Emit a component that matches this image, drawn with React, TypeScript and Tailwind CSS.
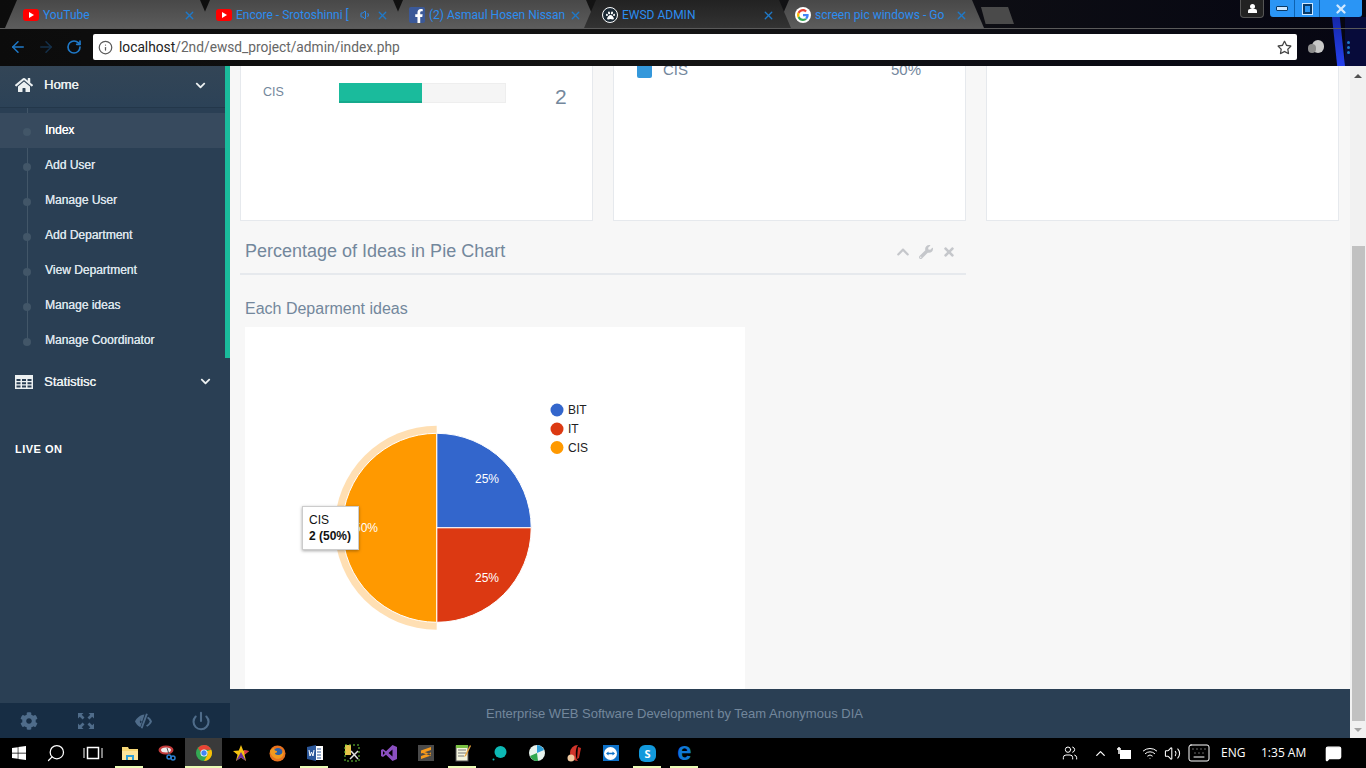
import React from "react";
import { FaHome, FaChevronDown, FaChevronUp, FaCog, FaWrench, FaTimes, FaWindows, FaFacebookF, FaPaw, FaRegStar } from "react-icons/fa";
import { Info, ArrowLeft, ArrowRight, RotateCw, X, Volume1, Search, ChevronUp, Wifi, Volume2, Keyboard, MessageSquare, Users, Power } from "lucide-react";

function YT() {
  return <span className="w-[16px] h-[12px] bg-[#f00] rounded-[3px] flex items-center justify-center shrink-0"><span className="w-0 h-0 border-y-[3px] border-y-transparent border-l-[5px] border-l-white" /></span>;
}
function GoogleG() {
  return (
    <svg width="16" height="16" viewBox="0 0 48 48" className="shrink-0">
      <circle cx="24" cy="24" r="24" fill="#fff" />
      <path fill="#EA4335" d="M24 13c3 0 5 1 6.800 2.700l4.800-4.800C32.400 8 28.500 6 24 6 17 6 11 10 8 16l5.600 4.300C15 16 19 13 24 13z" />
      <path fill="#4285F4" d="M41 24.500c0-1.300-.1-2.300-.3-3.500H24v6.500h9.700c-.4 2.200-1.700 4-3.600 5.300l5.500 4.300C39 33.800 41 29.600 41 24.500z" />
      <path fill="#FBBC05" d="M13.600 27.700c-.7-2.300-.7-5.100 0-7.400L8 16c-2.600 5-2.600 11 0 16z" />
      <path fill="#34A853" d="M24 42c4.700 0 8.600-1.500 11.600-4.200l-5.500-4.300c-1.600 1-3.600 1.700-6.100 1.700-5 0-9-3.200-10.400-7.500L8 32c3 6 9 10 16 10z" />
    </svg>
  );
}
const tabs = [
  { label: "YouTube", z: "z-[5]", icon: <YT /> },
  { label: "Encore - Srotoshinni [", z: "z-[4]", icon: <YT />, sound: true },
  { label: "(2) Asmaul Hosen Nissan", z: "z-[3]", icon: <span className="w-[16px] h-[16px] bg-[#3b5998] rounded-[2px] flex items-end justify-end overflow-hidden shrink-0"><FaFacebookF className="text-white text-[14px] -mr-[1px]" /></span> },
  { label: "EWSD ADMIN", z: "z-[6]", dark: true, icon: <span className="w-[16px] h-[16px] bg-[#1c2a35] rounded-full border border-white flex items-center justify-center shrink-0"><FaPaw className="text-white text-[9px]" /></span> },
  { label: "screen pic windows - Go", z: "z-[1]", icon: <GoogleG /> },
];
function Tab({ t }: { t: (typeof tabs)[number] }) {
  return (
    <div className={`w-[207px] h-[28px] relative -mr-[14px] shrink-0 ${t.z} ${t.dark ? "bg-gradient-to-b from-[#222] to-[#333]" : "bg-gradient-to-b from-[#484848] to-[#5c5c5c]"} [clip-path:polygon(12px_0,calc(100%-12px)_0,100%_100%,0_100%)] flex items-center pl-[18px] pr-[16px] pt-[2px] gap-[4px]`}>
      {t.icon}
      <span className="flex-1 min-w-0 whitespace-nowrap text-[12px] text-[#2c8df0] font-['Roboto',sans-serif] leading-none">{t.label}</span>
      {t.sound && <Volume1 size={12} className="text-[#2c8df0] shrink-0" />}
      <X size={13} strokeWidth={2.5} className="text-[#1f79c8] shrink-0" />
    </div>
  );
}

const menu = ["Index", "Add User", "Manage User", "Add Department", "View Department", "Manage ideas", "Manage Coordinator"];

function Chrome() {
  return (
    <div className="h-[66px] shrink-0 bg-gradient-to-r from-[#0c0c0c] via-[#141414] to-[#060612] relative overflow-hidden">
      <div className="absolute right-[21px] top-[17px] w-[13px] h-[49px] bg-gradient-to-b from-[#1528a8] to-[#2540ee] [clip-path:polygon(0_0,60%_0,100%_100%,40%_100%)]" />
      <div className="absolute right-0 top-[17px] w-[21px] h-[49px] bg-[#070b3a]" />
      <div className="flex h-[29px] pl-[5px] border-b border-[#5a5a5a] relative">
        {tabs.map((t) => <Tab key={t.label} t={t} />)}
        <div className="w-[33px] h-[17px] mt-[7px] ml-[11px] bg-[#4a4a4a] [clip-path:polygon(0_0,82%_0,100%_100%,14%_100%)]" />
        <div className="flex-1" />
        <div className="w-[24px] h-[18px] border border-t-0 border-[#555] rounded-b-[4px] bg-[#222] flex items-center justify-center mr-[6px]">
          <span className="flex flex-col items-center"><span className="w-[5px] h-[5px] rounded-full bg-white" /><span className="w-[9px] h-[4px] bg-white rounded-t-[2px]" /></span>
        </div>
        <div className="w-[92px] h-[17px] bg-[#2a95f5] rounded-b-[3px] flex mr-[4px] shrink-0">
          <div className="w-[25px] flex items-center justify-center border-r border-[#0d62b0]"><span className="w-[12px] h-[5px] bg-[#cfe8ff] border border-[#0a3a66] rounded-[1px]" /></div>
          <div className="w-[25px] flex items-center justify-center border-r border-[#0d62b0]"><span className="w-[9px] h-[10px] bg-[#2a95f5] border-2 border-[#0a3a66] outline outline-[1px] outline-[#cfe8ff]" /></div>
          <div className="flex-1 flex items-center justify-center"><X size={14} strokeWidth={4} className="text-[#cfe8ff]" /></div>
        </div>
      </div>
      <div className="flex items-center h-[26px] mt-[5px] relative">
        <div className="w-[93px] flex items-center pl-[9px] shrink-0">
          <ArrowLeft size={18} className="text-[#1f79c8]" />
          <ArrowRight size={18} className="text-[#15304a] ml-[10px]" />
          <RotateCw size={16} strokeWidth={2.5} className="text-[#1f79c8] ml-[11px]" />
        </div>
        <div className="w-[1204px] h-[26px] bg-white rounded-[2px] flex items-center pl-[5px] pr-[4px] shrink-0">
          <Info size={15} className="text-[#5a5a5a] shrink-0" />
          <span className="ml-[6px] pt-[1px] flex-1 text-[13.75px] leading-none font-['Roboto',sans-serif] text-[#666]"><span className="text-[#222]">localhost</span>/2nd/ewsd_project/admin/index.php</span>
          <FaRegStar className="text-[#444] text-[15px] mr-[1px]" />
        </div>
        <span className="ml-[11px] relative w-[16px] h-[15px] shrink-0">
          <span className="absolute right-0 top-0 w-[12px] h-[13px] rounded-full bg-[#c8c8c8]" />
          <span className="absolute left-0 top-[4px] w-[8px] h-[9px] rounded-full bg-[#8c8c8c]" />
        </span>
        <span className="ml-[23px] flex flex-col gap-[2px]"><i className="w-[3px] h-[3px] rounded-full bg-[#1f79c8]" /><i className="w-[3px] h-[3px] rounded-full bg-[#1f79c8]" /><i className="w-[3px] h-[3px] rounded-full bg-[#1f79c8]" /></span>
      </div>
    </div>
  );
}

function Sidebar() {
  return (
    <aside className="w-[230px] shrink-0 bg-[#2A3F54] flex flex-col relative text-[12px] font-['Liberation_Sans',sans-serif]">
      <div className="h-[292px] border-r-[5px] border-[#1ABB9C]">
        <div className="h-[42px] flex items-center pl-[15px] pr-[19px] pb-[3px] text-[#ECF0F1] border-b border-[#23374a] bg-gradient-to-b from-[#334556] to-[#2C4257]">
          <FaHome className="text-[18px] w-[18px]" />
          <span className="ml-[11px] flex-1 text-[13px] [text-shadow:0.3px_0_0_#ecf0f1]">Home</span>
          <FaChevronDown className="text-[11px]" />
        </div>
        <div className="relative pt-[5px]">
          <div className="absolute left-[27px] top-0 bottom-[15px] w-px bg-[#425668]" />
          {menu.map((m, i) => (
            <div key={m} className={`h-[35px] flex items-center pl-[45px] pb-[2px] relative ${i === 0 ? "bg-[#374a5e] text-white" : "text-[#dce3ea]"} [text-shadow:0.2px_0_0_currentColor]`}>
              <span className="absolute left-[23px] top-[15px] w-[8px] h-[8px] rounded-full bg-[#425668]" />
              {m}
            </div>
          ))}
        </div>
      </div>
      <div className="h-[48px] flex items-center pl-[15px] pr-[19px] pt-[1px] text-[#ECF0F1] -mt-[1px]">
        <svg width="18" height="14" viewBox="0 0 18 14" className="shrink-0" fill="currentColor"><path fillRule="evenodd" d="M0 0h18v14H0zM1.500 4v2h4V4zm5.500 0v2h4V4zm5.500 0v2h4V4zM1.500 7.200v2h4v-2zm5.500 0v2h4v-2zm5.500 0v2h4v-2zM1.500 10.400v2h4v-2zm5.500 0v2h4v-2zm5.500 0v2h4v-2z" /></svg>
        <span className="ml-[11px] flex-1 text-[13px] [text-shadow:0.3px_0_0_#ecf0f1]">Statistisc</span>
        <FaChevronDown className="text-[11px]" />
      </div>
      <div className="mt-[34px] pl-[15px] text-[11px] font-bold text-white tracking-[0.5px] leading-[20px]">LIVE ON</div>
      <div className="mt-auto h-[35px] bg-[#172D44] grid grid-cols-4 text-[#4F6C8A] text-[18px]">
        <div className="flex items-center justify-center"><FaCog /></div>
        <div className="flex items-center justify-center">
          <svg width="18" height="18" viewBox="0 0 18 18" fill="currentColor"><path d="M1 1h5.500L4.700 2.800 7.500 5.600 5.600 7.500 2.800 4.700 1 6.500zM17 1v5.500l-1.800-1.800-2.800 2.800-1.900-1.900 2.800-2.800L11.500 1zM1 17v-5.500l1.800 1.800 2.800-2.800 1.900 1.900-2.800 2.800L6.500 17zM17 17h-5.500l1.800-1.800-2.800-2.800 1.900-1.900 2.800 2.800 1.800-1.800z" /></svg>
        </div>
        <div className="flex items-center justify-center">
          <svg width="19" height="18" viewBox="0 0 19 18" fill="currentColor"><path fillRule="evenodd" d="M10.500 2.500C6 3 2.500 6 1 9.500c1 2.200 2.500 4 4.500 5.200l1 .3zM7.500 6.500a3 3 0 0 0-.8 4.800L8 9.500a1 1 0 0 1-.5-3z" /><path d="M12 1.500l1.800.6L8.500 16.500l-1.800-.6z" /><path d="M13 6l1.300-1.300C16 5.800 17.300 7.500 18 9.500c-1 2.300-2.600 4.200-4.800 5.300L12 13.600c1.700-.9 3-2.300 3.800-4.100-.6-1.400-1.600-2.600-2.800-3.500z" /></svg>
        </div>
        <div className="flex items-center justify-center"><Power size={20} strokeWidth={2.5} /></div>
      </div>
    </aside>
  );
}

function Pie() {
  const cx = 191.700, cy = 200.800, r = 94.500, R = 102;
  return (
    <svg width="500" height="362" viewBox="0 0 500 362" className="block">
      <path d={`M${cx} ${cy - R}A${R} ${R} 0 0 0 ${cx} ${cy + R}Z`} fill="#ffdfb3" />
      <path d={`M${cx} ${cy}V${cy - r}A${r} ${r} 0 0 1 ${cx + r} ${cy}Z`} fill="#3366CC" stroke="#fff" />
      <path d={`M${cx} ${cy}H${cx + r}A${r} ${r} 0 0 1 ${cx} ${cy + r}Z`} fill="#DC3912" stroke="#fff" />
      <path d={`M${cx} ${cy + r}A${r} ${r} 0 0 1 ${cx} ${cy - r}Z`} fill="#FF9900" stroke="#fff" />
      <g fontFamily="Liberation Sans, Arial, sans-serif" fontSize="12">
        <text x="242" y="156" textAnchor="middle" fill="#fff">25%</text>
        <text x="242" y="255" textAnchor="middle" fill="#fff">25%</text>
        <text x="121" y="205" textAnchor="middle" fill="#fff">50%</text>
        <circle cx="312" cy="83" r="6.500" fill="#3366CC" />
        <circle cx="312" cy="102" r="6.500" fill="#DC3912" />
        <circle cx="312" cy="120.500" r="6.500" fill="#FF9900" />
        <text x="323" y="87" fill="#222">BIT</text>
        <text x="323" y="106" fill="#222">IT</text>
        <text x="323" y="125" fill="#222">CIS</text>
      </g>
    </svg>
  );
}

function Card({ children }: { children?: React.ReactNode }) {
  return <div className="flex-1 bg-white border border-t-0 border-[#E6E9ED] relative overflow-hidden">{children}</div>;
}

function Main() {
  return (
    <main className="flex-1 min-w-0 flex flex-col bg-[#F7F7F7] overflow-hidden font-['Liberation_Sans',sans-serif] text-[#73879C]">
      <div className="flex-1 min-h-0 flex flex-col pl-[10px] pr-[11px] overflow-hidden">
        <div className="h-[155px] shrink-0 flex gap-[20px]">
          <Card>
            <div className="flex items-start pl-[22px] pt-[17px]">
              <span className="w-[76px] text-[12.500px] leading-[19px]">CIS</span>
              <div className="w-[167px] h-[20px] bg-[#f5f5f5] border border-[#eee]">
                <div className="w-[83px] -ml-px -mt-px h-[20px] bg-[#1ABB9C] border-b-2 border-[#16a98c]" />
              </div>
              <span className="ml-[49px] text-[21px] leading-[27px]">2</span>
            </div>
          </Card>
          <Card>
            <div className="flex items-center pl-[23px] -mt-[5px] h-[18px]">
              <span className="w-[15px] h-[15px] bg-[#3498DB] rounded-[2px]" />
              <span className="ml-[11px] text-[15px] w-[228px]">CIS</span>
              <span className="text-[15px]">50%</span>
            </div>
          </Card>
          <Card />
        </div>
        <div className="w-[726px] h-[54px] shrink-0 border-b-2 border-[#E6E9ED] flex items-center pl-[5px] pr-[10px] -mb-px">
          <span className="flex-1 text-[18px] mt-[8px]">Percentage of Ideas in Pie Chart</span>
          <span className="flex items-center gap-[9px] text-[#C5C7CB] text-[14px] mt-[10px]"><FaChevronUp /><FaWrench /><FaTimes /></span>
        </div>
        <div className="pl-[5px] mt-[25px] text-[16px] leading-[20px] shrink-0">Each Deparment ideas</div>
        <div className="ml-[5px] mt-[8px] w-[500px] bg-white relative flex-1 min-h-0 overflow-hidden shrink-0">
          <Pie />
          <div className="absolute left-[57px] top-[179px] w-[57px] h-[44px] bg-white border border-[#ccc] shadow-[0_1px_3px_rgba(0,0,0,0.35)] px-[6px] py-[5px] text-[12px] leading-[16px] text-[#111]">
            <div>CIS</div>
            <div className="whitespace-nowrap font-bold">2 (50%)</div>
          </div>
        </div>
      </div>
      <footer className="h-[49px] shrink-0 bg-[#2A3F54] flex items-center pl-[256px] text-[13px] text-[#73879C]">Enterprise WEB Software Development by Team Anonymous DIA</footer>
    </main>
  );
}

function Scrollbar() {
  return (
    <div className="w-[16px] shrink-0 bg-[#F1F1F1] flex flex-col items-center">
      <div className="h-[17px] pt-[2px] flex items-center justify-center"><span className="w-0 h-0 border-x-[4px] border-x-transparent border-b-[4px] border-b-[#505050]" /></div>
      <div className="mt-[163px] w-[13px] h-[475px] bg-[#C1C1C1]" />
      <div className="mt-auto h-[16px] flex items-center justify-center"><span className="w-0 h-0 border-x-[4px] border-x-transparent border-t-[4px] border-t-[#a3a3a3]" /></div>
    </div>
  );
}

function T({ active, children }: { active?: boolean; children: React.ReactNode }) {
  return <div className="w-[37px] h-[30px] shrink-0 flex items-center justify-center relative">{children}{active && <span className="absolute bottom-0 left-[4px] right-[5px] h-[2px] bg-[#e9fbb5]" />}</div>;
}

function Taskbar() {
  return (
    <div className="h-[30px] shrink-0 bg-black flex items-center text-white font-['Open_Sans',sans-serif]">
      <T><FaWindows className="text-[16px]" /></T>
      <T><Search size={20} strokeWidth={1.5} className="-scale-x-100" /></T>
      <T><svg width="20" height="14" viewBox="0 0 20 14" fill="none" stroke="#fff"><rect x="4.500" y="1.500" width="11" height="11" strokeWidth="1.500"/><path d="M1 2v10M19 2v10" /></svg></T>
      <T active><svg width="16" height="15" viewBox="0 0 16 15"><path d="M0 1h6l1 2h9v11H0z" fill="#f6d777"/><rect x="0" y="5" width="16" height="9" fill="#fbe49c"/><path d="M4 14V9h8v5h-2v-3H6v3z" fill="#2e9fd8"/></svg></T>
      <T><svg width="18" height="16" viewBox="0 0 18 16"><ellipse cx="8" cy="5" rx="7.500" ry="4.500" fill="#c23b3b"/><ellipse cx="8" cy="5" rx="5" ry="2.500" fill="#eee"/><path d="M9 3L11 9" stroke="#555"/><circle cx="11" cy="12" r="2" fill="none" stroke="#2a7fd0" strokeWidth="1.500"/><circle cx="15" cy="13" r="2" fill="none" stroke="#2a7fd0" strokeWidth="1.500"/></svg></T>
      <div className="w-[37px] h-[30px] bg-[#3a3a3a] shrink-0 flex items-center justify-center relative">
        <svg width="16" height="16" viewBox="0 0 16 16"><circle cx="8" cy="8" r="8" fill="#34A853"/><path d="M8 0a8 8 0 0 1 7.300 4.700H8a3.500 3.500 0 0 0-3.300 2.200L2 3a8 8 0 0 1 6-3z" fill="#EA4335"/><path d="M15.300 4.700A8 8 0 0 1 8 16l3-5.300a3.500 3.500 0 0 0-.500-4.500z" fill="#FBBC05"/><circle cx="8" cy="8" r="3.500" fill="#fff"/><circle cx="8" cy="8" r="2.700" fill="#4285F4"/></svg>
        <span className="absolute bottom-0 inset-x-0 h-[2px] bg-[#e9fbb5]" />
      </div>
      <T><svg width="16" height="16" viewBox="0 0 16 16"><path d="M8 0l2.200 5.500L16 6l-4.500 3.700L13 16 8 12.600 3 16l1.500-6.300L0 6l5.800-.5z" fill="#f5c211"/><path d="M8 7l5 9-5-3.400L3 16z" fill="#6b2fa0"/><path d="M11 5l5 1-4.500 3.700z" fill="#d8344b"/></svg></T>
      <T><svg width="17" height="17" viewBox="0 0 17 17"><circle cx="8.500" cy="8.500" r="8" fill="#e8721f"/><circle cx="9" cy="7.500" r="4.500" fill="#2a5fa8"/><path d="M1 6c1 7 8 10 12 6 2-2 2-5 1-7 0 3-2 5-5 5-2 0-3-1-3-2 2 0 2-1 2-2-2 0-3-1-3-3C3 4 2 4 1 6z" fill="#f29a1f"/></svg></T>
      <T active><svg width="16" height="16" viewBox="0 0 16 16"><rect x="5" y="1" width="11" height="14" fill="#fff"/><path d="M10 4h4M10 7h4M10 10h4M10 13h4" stroke="#2b579a"/><path d="M0 2l9-2v16l-9-2z" fill="#2b579a"/><path d="M2 5l1 6 1.500-4 1.500 4 1-6" stroke="#fff" fill="none"/></svg></T>
      <T><svg width="16" height="18" viewBox="0 0 16 18"><rect x="1" y="1" width="6" height="10" fill="#e6c34a"/><rect x="1" y="1" width="14" height="16" fill="none" stroke="#6fd13a" strokeDasharray="2 2"/><path d="M6 15l8-8M7 7l7 8" stroke="#ddd" strokeWidth="1.500"/></svg></T>
      <T><svg width="16" height="16" viewBox="0 0 16 16"><path d="M11.500 0L16 2v12l-4.500 2L5 9.800 2 12l-2-1V5l2-1 3 2.200zM11.500 4.500L7.500 8l4 3.500zM2 6v4l2-2z" fill="#8a4fc0"/></svg></T>
      <T><span className="w-[16px] h-[16px] bg-[#4a4a4a] flex items-center justify-center"><svg width="10" height="12" viewBox="0 0 10 12" fill="#f59a1c"><path d="M0 3.500L10 0v3L0 6.500zM10 5.500L0 9v3l10-3.500zM0 4l10 3-1 1.500L0 5.500z"/></svg></span></T>
      <T active><svg width="16" height="18" viewBox="0 0 16 18"><rect x="1" y="2" width="12" height="15" fill="#f4f4dc" stroke="#555"/><path d="M3 6h8M3 9h8M3 12h6" stroke="#777"/><rect x="1" y="1" width="12" height="3" fill="#7ac143"/><path d="M15 1l-5 10-1 2 2-1 5-10z" fill="#e8a33d"/></svg></T>
      <T><svg width="15" height="16" viewBox="0 0 15 16"><circle cx="8.500" cy="7" r="6" fill="#0db9b5"/><circle cx="1.500" cy="14.500" r="1" fill="#0db9b5"/></svg></T>
      <T><svg width="18" height="18" viewBox="0 0 18 18"><circle cx="9" cy="9" r="8" fill="#e8f4ee"/><path d="M9 1a8 8 0 0 1 7 5l-7 3z" fill="#2e9fd8"/><path d="M2 12a8 8 0 0 0 8 5l-1-8z" fill="#2fa84f"/></svg></T>
      <T><svg width="16" height="18" viewBox="0 0 16 18"><path d="M12 1a8 8 0 1 0 0 16c-3-2-3-13 0-16z" fill="#d1352b"/><circle cx="5" cy="14" r="3.500" fill="#f0c9a0"/><path d="M12 3l3 1-2 10-2 1z" fill="#c72c22"/></svg></T>
      <T><span className="w-[16px] h-[16px] bg-[#0e72c9] flex items-center justify-center"><svg width="13" height="13" viewBox="0 0 13 13"><circle cx="6.500" cy="6.500" r="6.500" fill="#fff"/><path d="M2 6.500l2.500-2v1.200h4V4.500l2.500 2-2.500 2V7.300h-4v1.200z" fill="#0e72c9"/></svg></span></T>
      <T active><span className="relative w-[17px] h-[17px] bg-[#1299dc] rounded-[6px] flex items-center justify-center"><span className="w-[12px] h-[12px] flex items-center justify-center text-white text-[11px] font-bold leading-none">S</span></span></T>
      <T active><span className="text-[#0f78d4] text-[26px] font-bold leading-none -mt-[4px] font-['Liberation_Sans',sans-serif]">e</span></T>
      <div className="flex-1" />
      <div className="flex items-center text-white">
        <Users size={16} strokeWidth={1.5} className="mr-[15px]" />
        <ChevronUp size={15} className="mr-[8px]" />
        <svg width="15" height="14" viewBox="0 0 15 14" fill="none" stroke="#fff" className="mr-[11px]"><rect x="4.500" y="4.500" width="10" height="8" fill="#fff"/><path d="M3 1v7M1 3h4" strokeWidth="1.500"/></svg>
        <Wifi size={16} strokeWidth={1.500} className="mr-[6px]" />
        <Volume2 size={17} strokeWidth={1.500} className="mr-[6px]" />
        <Keyboard size={24} strokeWidth={1} className="mr-[10px]" />
        <span className="text-[12px] w-[30px]">ENG</span>
        <span className="text-[12px] ml-[10px] w-[47px] whitespace-nowrap">1:35 AM</span>
        <MessageSquare size={17} fill="#fff" className="ml-[17px] mr-[24px]" />
      </div>
    </div>
  );
}

export default function App() {
  return (
    <div className="w-[1366px] h-[768px] overflow-hidden flex flex-col bg-black">
      <Chrome />
      <div className="flex-1 min-h-0 flex">
        <Sidebar />
        <Main />
        <Scrollbar />
      </div>
      <Taskbar />
    </div>
  );
}
